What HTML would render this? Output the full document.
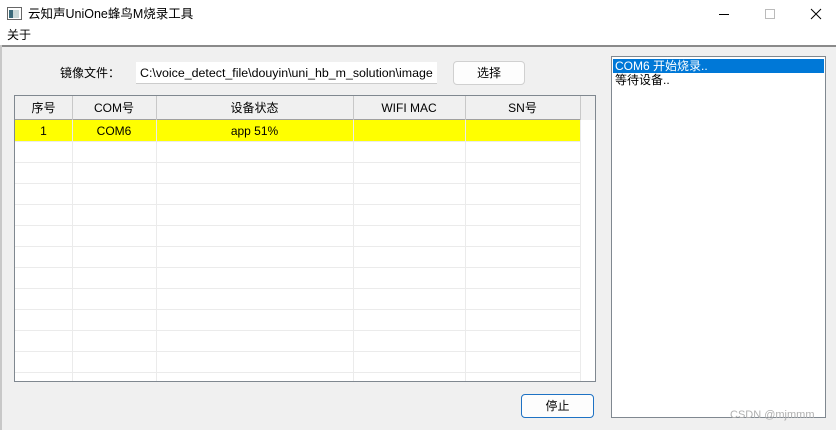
<!DOCTYPE html><html><head><meta charset="utf-8"><style>
*{margin:0;padding:0;box-sizing:border-box}
body{width:836px;height:430px;background:#f0f0f0;font-family:"Liberation Sans","Noto Sans CJK SC",sans-serif;font-size:12px;line-height:14px;color:#000;position:relative;overflow:hidden}
.a{position:absolute}
.t{white-space:nowrap;line-height:14px}
</style></head><body>
<div class="a" style="left:0;top:0;width:836px;height:46px;background:#fff"></div>
<div class="a" style="left:0;top:45px;width:836px;height:2px;background:#8a8a8a"></div>
<div class="a" style="left:0;top:45px;width:2px;height:385px;background:#c8c8c8"></div>
<svg class="a" style="left:7px;top:7px" width="15" height="14"><rect x="0.5" y="0.5" width="14" height="12" fill="#fff" stroke="#666"/><rect x="2" y="3" width="4" height="8" fill="#3a6a7a"/><rect x="6" y="3" width="6" height="8" fill="#c8d8d8"/></svg>
<div class="a t" style="left:28px;top:7px;font-size:12.5px">云知声UniOne蜂鸟M烧录工具</div>
<div class="a t" style="left:7px;top:28px">关于</div>
<div class="a" style="left:719px;top:14px;width:10px;height:1px;background:#000"></div>
<div class="a" style="left:765px;top:9px;width:10px;height:10px;border:1px solid #bbb"></div>
<svg class="a" style="left:810px;top:8px" width="12" height="12"><path d="M1 1L11 11M11 1L1 11" stroke="#000" stroke-width="1"/></svg>

<div class="a t" style="left:60px;top:66px">镜像文件：</div>
<div class="a" style="left:136px;top:62px;width:301px;height:22px;background:#fff;border-bottom:1px solid #ccc"></div>
<div class="a t" style="left:140px;top:66px;width:296px;overflow:hidden;font-size:12.4px">C:\voice_detect_file\douyin\uni_hb_m_solution\image</div>
<div class="a" style="left:453px;top:61px;width:72px;height:24px;background:#fdfdfd;border:1px solid #d0d0d0;border-radius:4px;text-align:center;line-height:22px">选择</div>

<div class="a" style="left:14px;top:95px;width:582px;height:287px;background:#fff;border:1px solid #808890;overflow:hidden">
 <div class="a" style="left:0;top:0;width:580px;height:24px;background:#f0f0f0;border-bottom:1px solid #a0a0a0"></div>
 <div class="a" style="left:565px;top:0;width:15px;height:24px;background:#f0f0f0"></div>
 <div class="a" style="left:0;top:24px;width:565px;height:21px;background:#ffff00"></div>
 <div id="g"></div>
</div>
<div class="a" style="left:611px;top:56px;width:215px;height:362px;background:#fff;border:1px solid #808890"></div>
<div class="a" style="left:613px;top:59px;width:211px;height:14px;background:#0078d7"></div>
<div class="a t" style="left:615px;top:59px;color:#fff">COM6 开始烧录..</div>
<div class="a t" style="left:615px;top:73px">等待设备..</div>
<div class="a" style="left:521px;top:394px;width:73px;height:24px;background:#fdfdfd;border:1px solid #1e72c4;border-radius:4px;text-align:center;line-height:22px">停止</div>
<div class="a t" style="left:730px;top:408px;font-size:11px;color:#b0b0b0">CSDN @mjmmm</div>
<script>
var g=document.getElementById('g'),h='';
var cols=[57,141,338,450,565];
cols.forEach(function(x){h+='<div class="a" style="left:'+x+'px;top:0;width:1px;height:24px;background:#c8c8c8"></div><div class="a" style="left:'+x+'px;top:24px;width:1px;height:262px;background:#ebebeb"></div>';});
for(var y=45;y<290;y+=21)h+='<div class="a" style="left:0;top:'+y+'px;width:565px;height:1px;background:#ebebeb"></div>';
var hd=[[0,57,'序号'],[57,84,'COM号'],[141,197,'设备状态'],[338,112,'WIFI MAC'],[450,115,'SN号']];
hd.forEach(function(c){h+='<div class="a t" style="left:'+c[0]+'px;width:'+c[1]+'px;top:5px;text-align:center">'+c[2]+'</div>';});
var r=[[0,57,'1'],[57,84,'COM6'],[141,197,'app 51%']];
r.forEach(function(c){h+='<div class="a t" style="left:'+c[0]+'px;width:'+c[1]+'px;top:28px;text-align:center">'+c[2]+'</div>';});
g.innerHTML=h;
</script>
</body></html>
